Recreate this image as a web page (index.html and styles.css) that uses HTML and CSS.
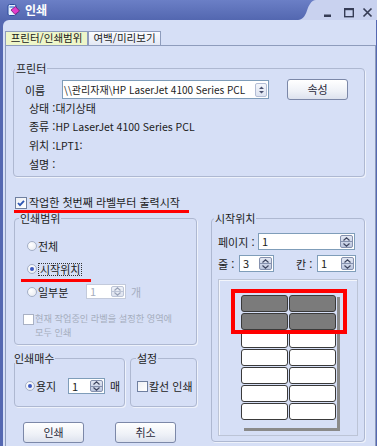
FILE: index.html
```html
<!DOCTYPE html>
<html lang="ko">
<head>
<meta charset="utf-8">
<title>인쇄</title>
<link rel="stylesheet" href="styles.css">
</head>
<body>
<div class="window">
  <header class="titlebar">
    <div class="title-main">
      <svg class="app-icon" width="13" height="14" viewBox="0 0 13 14">
        <rect x="1" y="1.5" width="8" height="11" rx="1.5" fill="#e6f3ff" stroke="#2b4a9c" stroke-width="1"/>
        <rect x="2.5" y="3" width="5" height="2" fill="#7fa8e8"/>
        <polygon points="4,7 8.5,3.5 12.5,8 8,11.5" fill="#e33bcb" stroke="#6e1a72" stroke-width="0.8"/>
      </svg>
      <span class="title-text">인쇄</span>
    </div>
    <svg class="title-curve" width="18" height="20" viewBox="0 0 18 20">
      <defs>
        <linearGradient id="tg" x1="0" y1="0" x2="0" y2="1">
          <stop offset="0" stop-color="#6b7fc6"/>
          <stop offset="1" stop-color="#5367b0"/>
        </linearGradient>
      </defs>
      <path d="M0 0 H18 C13 0.5 11 5 9 10.5 C7 16.5 4 20 0 20 Z" fill="url(#tg)"/>
    </svg>
    <div class="title-controls">
      <svg width="61" height="20" viewBox="0 0 61 20">
        <rect x="8" y="14.5" width="7" height="2.5" fill="#363c55"/>
        <rect x="28.7" y="8.7" width="8.6" height="8" fill="none" stroke="#363c55" stroke-width="1.4"/>
        <rect x="28" y="8" width="10" height="2.2" fill="#363c55"/>
        <path d="M47.5 8.5 L55.5 16.5 M55.5 8.5 L47.5 16.5" stroke="#363c55" stroke-width="1.7"/>
      </svg>
    </div>
  </header>

  <div class="client">
    <div class="tabs">
      <div class="tab tab-active">프린터/인쇄범위</div>
      <div class="tab tab-second">여백/미리보기</div>
    </div>

    <div class="panel">
      <fieldset class="group printer-group">
        <legend>프린터</legend>
        <div class="name-row">
          <span class="name-label">이름</span>
          <div class="combo">
            <span class="combo-text">\\관리자재\HP LaserJet 4100 Series PCL</span>
            <span class="combo-btn">
              <svg width="7" height="8" viewBox="0 0 7 8"><path d="M3.5 0.5 L6 3 H1 Z M1 5 H6 L3.5 7.5 Z" fill="#4a5270"/></svg>
            </span>
          </div>
          <button class="btn btn-prop" type="button">속성</button>
        </div>
        <ul class="info">
          <li>상태 :대기상태</li>
          <li>종류 :<span class="latin">HP LaserJet 4100 Series PCL</span></li>
          <li>위치 :<span class="latin">LPT1:</span></li>
          <li>설명 :</li>
        </ul>
      </fieldset>

      <div class="check-row first-check">
        <span class="checkbox">
          <svg width="10" height="10" viewBox="0 0 10 10"><path d="M2 5 L4 7.2 L8 2.8" fill="none" stroke="#2d56b3" stroke-width="1.8"/></svg>
        </span>
        <span>작업한 첫번째 라벨부터 출력시작</span>
      </div>
      <div class="mark-line mark-line-1"></div>

      <div class="lower">
        <div class="left-col">
          <fieldset class="group range-group">
            <legend>인쇄범위</legend>
            <div class="radio-row">
              <span class="radio"></span><span class="radio-text">전체</span>
            </div>
            <div class="radio-row row-gap">
              <span class="radio selected"></span><span class="radio-text focus">시작위치</span>
            </div>
            <div class="mark-line mark-line-2"></div>
            <div class="radio-row part-row">
              <span class="radio"></span><span class="radio-text part-label">일부분</span>
              <div class="spin spin-part disabled">
                <span class="spin-val">1</span>
                <span class="spin-btns">
                  <span class="spin-up"><svg width="7" height="4" viewBox="0 0 7 4"><path d="M0.5 3.5 L3.5 0.8 L6.5 3.5" fill="none" stroke="#9aa3b8" stroke-width="1.2"/></svg></span>
                  <span class="spin-down"><svg width="7" height="4" viewBox="0 0 7 4"><path d="M0.5 0.5 L3.5 3.2 L6.5 0.5" fill="none" stroke="#9aa3b8" stroke-width="1.2"/></svg></span>
                </span>
              </div>
              <span class="unit disabled-text">개</span>
            </div>
            <div class="check-row disabled-check">
              <span class="checkbox small disabled"></span>
              <div class="disabled-text two-line">
                <span class="tl">현재 작업중인 라벨을 설정한 영역에</span>
                <span class="tl">모두 인쇄</span>
              </div>
            </div>
          </fieldset>

          <div class="sub-groups">
            <fieldset class="group copies-group">
              <legend>인쇄매수</legend>
              <div class="radio-row">
                <span class="radio selected"></span><span class="radio-text copies-label">용지</span>
                <div class="spin spin-copies">
                  <span class="spin-val">1</span>
                  <span class="spin-btns">
                    <span class="spin-up"><svg width="7" height="4" viewBox="0 0 7 4"><path d="M0.5 3.5 L3.5 0.8 L6.5 3.5" fill="none" stroke="#3f4660" stroke-width="1.2"/></svg></span>
                    <span class="spin-down"><svg width="7" height="4" viewBox="0 0 7 4"><path d="M0.5 0.5 L3.5 3.2 L6.5 0.5" fill="none" stroke="#3f4660" stroke-width="1.2"/></svg></span>
                  </span>
                </div>
                <span class="unit">매</span>
              </div>
            </fieldset>
            <fieldset class="group setting-group">
              <legend>설정</legend>
              <div class="check-row setting-check">
                <span class="checkbox small"></span>
                <span>칼선 인쇄</span>
              </div>
            </fieldset>
          </div>

          <div class="actions">
            <button class="btn" type="button">인쇄</button>
            <button class="btn btn-cancel" type="button">취소</button>
          </div>
        </div>

        <fieldset class="group start-group">
          <legend>시작위치</legend>
          <div class="field-row">
            <span class="page-label">페이지 :</span>
            <div class="spin spin-page">
              <span class="spin-val">1</span>
              <span class="spin-btns">
                <span class="spin-up"><svg width="7" height="4" viewBox="0 0 7 4"><path d="M0.5 3.5 L3.5 0.8 L6.5 3.5" fill="none" stroke="#3f4660" stroke-width="1.2"/></svg></span>
                <span class="spin-down"><svg width="7" height="4" viewBox="0 0 7 4"><path d="M0.5 0.5 L3.5 3.2 L6.5 0.5" fill="none" stroke="#3f4660" stroke-width="1.2"/></svg></span>
              </span>
            </div>
          </div>
          <div class="field-row row2">
            <span class="row-label">줄 :</span>
            <div class="spin spin-row">
              <span class="spin-val">3</span>
              <span class="spin-btns">
                <span class="spin-up"><svg width="7" height="4" viewBox="0 0 7 4"><path d="M0.5 3.5 L3.5 0.8 L6.5 3.5" fill="none" stroke="#3f4660" stroke-width="1.2"/></svg></span>
                <span class="spin-down"><svg width="7" height="4" viewBox="0 0 7 4"><path d="M0.5 0.5 L3.5 3.2 L6.5 0.5" fill="none" stroke="#3f4660" stroke-width="1.2"/></svg></span>
              </span>
            </div>
            <span class="col-label">칸 :</span>
            <div class="spin spin-col">
              <span class="spin-val">1</span>
              <span class="spin-btns">
                <span class="spin-up"><svg width="7" height="4" viewBox="0 0 7 4"><path d="M0.5 3.5 L3.5 0.8 L6.5 3.5" fill="none" stroke="#3f4660" stroke-width="1.2"/></svg></span>
                <span class="spin-down"><svg width="7" height="4" viewBox="0 0 7 4"><path d="M0.5 0.5 L3.5 3.2 L6.5 0.5" fill="none" stroke="#3f4660" stroke-width="1.2"/></svg></span>
              </span>
            </div>
          </div>
          <div class="preview">
            <div class="sheet">
              <div class="cell used"></div><div class="cell used"></div>
              <div class="cell used"></div><div class="cell used"></div>
              <div class="cell"></div><div class="cell"></div>
              <div class="cell"></div><div class="cell"></div>
              <div class="cell"></div><div class="cell"></div>
              <div class="cell"></div><div class="cell"></div>
              <div class="cell"></div><div class="cell"></div>
            </div>
            <div class="mark-box"></div>
          </div>
        </fieldset>
      </div>
    </div>
  </div>
</div>
</body>
</html>
```

FILE: styles.css
```css
* { box-sizing: border-box; }

html, body {
  margin: 0;
  padding: 0;
}

body {
  width: 377px;
  height: 446px;
  overflow: hidden;
  font-family: "Noto Sans CJK KR", "Noto Sans", sans-serif;
  font-size: 11px;
  color: #1c1c1c;
  background: #5568b1;
}

.window {
  width: 377px;
  height: 446px;
  display: flex;
  flex-direction: column;
  background: #5568b1;
}

/* ---------- title bar ---------- */
.titlebar {
  height: 20px;
  flex: none;
  display: flex;
}

.title-main {
  flex: 1;
  display: flex;
  align-items: center;
  padding-left: 7px;
  background: linear-gradient(#6b7fc6, #5367b0);
}

.app-icon { display: block; flex: none; }

.title-text {
  margin-left: 5px;
  color: #fff;
  font-weight: bold;
  font-size: 12px;
  line-height: 14px;
}

.title-curve {
  display: block;
  flex: none;
  background: #c9d2ef;
}

.title-controls {
  width: 61px;
  flex: none;
  background: #c9d2ef;
}

.title-controls svg { display: block; }

/* ---------- client area ---------- */
.client {
  flex: 1;
  margin: 0 1px 0 3px;
  padding: 11px 0 0 2px;
  background: #d6dff6;
  border-top-left-radius: 6px;
  display: flex;
  flex-direction: column;
}

.tabs {
  display: flex;
  height: 14px;
  flex: none;
}

.tab {
  height: 14px;
  border: 1px solid #8e9cbc;
  border-bottom: none;
  font-size: 10.5px;
  line-height: 12px;
  text-align: center;
  white-space: nowrap;
  background: linear-gradient(#fbfcff, #e3e8f4);
}

.tab-active {
  width: 83px;
  background: #eef6c9;
}

.tab-second {
  width: 73px;
}

.panel {
  flex: 1;
  border: 1px solid #8e9cbc;
  border-bottom: none;
  padding-top: 15px;
}

/* ---------- group boxes ---------- */
.group {
  margin: 0;
  min-width: 0;
  border: 1px solid #aeb8d1;
  border-radius: 4px;
  box-shadow: 1px 1px 0 #eef2fb;
}

.group > legend {
  padding: 0 1px;
  line-height: 10px;
}

.printer-group {
  width: 352px;
  margin-left: 7px;
  padding: 4px 10px 3px 11px;
}

.printer-group > legend {
  line-height: 14px;
  margin-left: -10px;
}

.name-row {
  display: flex;
  align-items: center;
  height: 21px;
}

.name-label {
  width: 37px;
  flex: none;
}

.combo {
  width: 207px;
  height: 19px;
  flex: none;
  display: flex;
  align-items: center;
  border: 1px solid #7f9db9;
  background: #fff;
}

.combo-text {
  flex: 1;
  padding-left: 1px;
  font-size: 10px;
  line-height: 15px;
  white-space: nowrap;
  overflow: hidden;
}

.combo-btn {
  width: 12px;
  height: 14px;
  margin-right: 1px;
  flex: none;
  display: flex;
  align-items: center;
  justify-content: center;
  border: 1px solid #b3bdd5;
  border-radius: 2px;
  background: linear-gradient(#f4f6fb, #dde3f0);
}

.combo-btn svg { display: block; }

.btn {
  height: 21px;
  width: 61px;
  padding: 0;
  font: inherit;
  font-size: 11px;
  line-height: 19px;
  color: #2a2a3a;
  border: 1px solid #7c88a8;
  border-radius: 3px;
  background: linear-gradient(#ffffff, #eef1f7 60%, #dde2ee);
}

.btn-prop { margin-left: 18px; }

.info {
  list-style: none;
  margin: -1px 0 0 0;
  padding: 0 0 0 4px;
}

.info li {
  line-height: 18px;
  white-space: nowrap;
}

.latin {
  font-size: 10.5px;
}

/* ---------- checkboxes / radios ---------- */
.check-row {
  display: flex;
  align-items: center;
}

.first-check {
  margin: 19px 0 0 9px;
  height: 13px;
  line-height: 13px;
  gap: 2px;
}

.checkbox {
  width: 12px;
  height: 12px;
  flex: none;
  display: flex;
  align-items: center;
  justify-content: center;
  border: 1px solid #6f7f9f;
  background: linear-gradient(135deg, #eef0f5, #ffffff);
}

.checkbox svg { display: block; }

.checkbox.small {
  width: 11px;
  height: 11px;
}

.checkbox.disabled {
  border-color: #a9b1c4;
  background: #fff;
}

.mark-line {
  height: 3px;
  background: #ff0000;
}

.mark-line-1 {
  width: 175px;
  margin: 1px 0 0 8px;
}

.mark-line-2 {
  width: 70px;
  margin: 2px 0 0 -6px;
}

.radio-row {
  display: flex;
  align-items: center;
  height: 16px;
  line-height: 16px;
}

.row-gap { margin-top: 7px; }

.radio {
  width: 10px;
  height: 10px;
  flex: none;
  display: flex;
  align-items: center;
  justify-content: center;
  border: 1px solid #a5b0c7;
  border-radius: 50%;
  background: radial-gradient(circle at 35% 35%, #ffffff, #e3e7ef);
}

.radio.selected::after {
  content: "";
  width: 4px;
  height: 4px;
  border-radius: 50%;
  background: #3b58c2;
}

.radio-text { margin-left: 1px; }

.focus {
  line-height: 11px;
  padding: 0 1px;
  border: 1px dotted #333;
}

/* ---------- lower area ---------- */
.lower {
  display: flex;
  align-items: flex-start;
  margin-left: 8px;
  gap: 14px;
}

.left-col {
  width: 183px;
  flex: none;
}

.range-group {
  width: 183px;
  padding: 15px 6px 5px 12px;
}

.range-group > legend { margin-left: -8px; }

.part-row {
  margin-top: 2px;
  height: 15px;
}

.part-label { width: 48px; }

.disabled-text { color: #a5adbd; }

.unit { margin-left: 5px; }

.disabled-check {
  margin: 13px 0 0 -4px;
  align-items: flex-start;
}

.disabled-check .checkbox { margin-top: 2px; }

.two-line {
  margin-left: 1px;
  font-size: 9.2px;
  white-space: nowrap;
}

.tl {
  display: block;
  height: 13.5px;
  line-height: 13.5px;
}

.sub-groups {
  display: flex;
  gap: 5px;
  margin-top: 8px;
}

.copies-group {
  width: 111px;
  flex: none;
  padding: 15px 4px 12px 10px;
}

.copies-group > legend { margin-left: -12px; }

.copies-label { width: 36px; }

.setting-group {
  width: 67px;
  flex: none;
  padding: 17px 2px 14px 6px;
}

.setting-group > legend { margin-left: -1px; }

.setting-check {
  gap: 1px;
  height: 12px;
  line-height: 12px;
}

.actions {
  display: flex;
  gap: 31px;
  margin: 15px 0 0 9px;
}

/* ---------- spinners ---------- */
.spin {
  display: flex;
  height: 17px;
  flex: none;
  border: 1px solid #7f9db9;
  background: #fff;
}

.spin-val {
  flex: 1;
  padding-left: 3px;
  line-height: 15px;
}

.spin-btns {
  width: 13px;
  margin: 1px;
  flex: none;
  display: flex;
  flex-direction: column;
  border: 1px solid #8591ae;
  border-radius: 2px;
  background: linear-gradient(#e2e7f3, #bcc6de);
}

.spin-btns > span {
  flex: 1;
  display: flex;
  align-items: center;
  justify-content: center;
}

.spin-btns svg { display: block; }

.spin-up { border-bottom: 1px solid #8591ae; }

.spin.disabled {
  border-color: #c3cadb;
}

.spin.disabled .spin-val { color: #a5adbd; }

.spin.disabled .spin-btns {
  border-color: #bcc4d6;
  background: linear-gradient(#eef1f8, #dde2ee);
}

.spin.disabled .spin-up { border-bottom-color: #bcc4d6; }

.spin-part {
  width: 40px;
  height: 15px;
}

.spin-part .spin-val { line-height: 13px; }

.spin-copies { width: 37px; height: 16px; }
.spin-copies .spin-val { line-height: 14px; }

.start-group {
  width: 154px;
  flex: none;
  padding: 10px 6px 5px 6px;
}

.start-group > legend { margin-left: -4px; }

.field-row {
  display: flex;
  align-items: center;
  height: 17px;
}

.row2 { margin-top: 5px; }

.page-label { width: 40px; flex: none; }

.spin-page { width: 97px; }

.row-label { width: 21px; flex: none; }

.spin-row { width: 35px; }

.col-label {
  width: 21px;
  margin-left: 22px;
  flex: none;
}

.spin-col { width: 39px; }

/* ---------- preview ---------- */
.preview {
  position: relative;
  height: 157px;
  margin-top: 7px;
  padding: 14px 0 0 22px;
  border: 1px solid #bcc4d6;
  box-shadow: inset 1px 1px 0 #f3f5fb;
}

.sheet {
  width: 96px;
  height: 134px;
  padding-top: 1px;
  display: grid;
  grid-template-columns: 47px 47px;
  grid-auto-rows: 17px;
  gap: 1px;
  align-content: start;
  box-shadow: 3px 3px 0 #8a8a8a;
}

.cell {
  border: 1px solid #3a3a3a;
  border-radius: 3px;
  background: #fff;
}

.cell.used { background: #7b7b7b; }

.mark-box {
  position: absolute;
  left: 12px;
  top: 9px;
  width: 116px;
  height: 45px;
  border: 4px solid #ff0000;
}
```
